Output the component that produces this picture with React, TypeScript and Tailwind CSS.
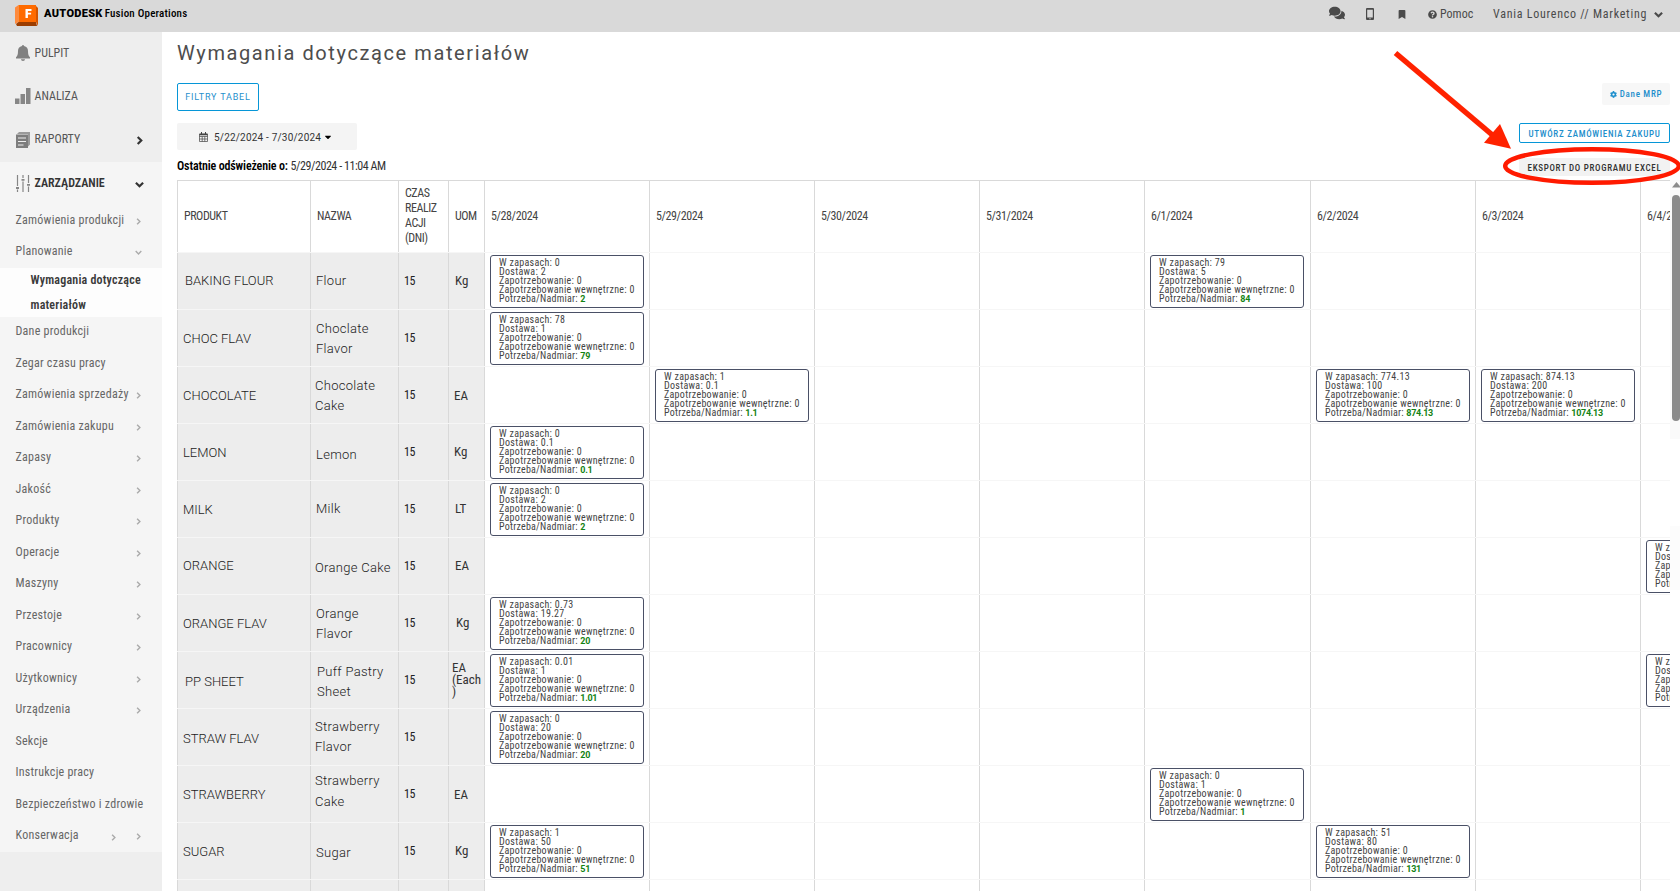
import type { ReactNode } from "react";
import { FaBookmark, FaCaretDown, FaCog, FaComments, FaQuestionCircle } from "react-icons/fa";

const COLS = "grid grid-cols-[133px_88px_50px_36px_165px_165px_165px_165px_166px_165px_165px_160px]";
const DATES = ["5/28/2024", "5/29/2024", "5/30/2024", "5/31/2024", "6/1/2024", "6/2/2024", "6/3/2024", "6/4/2024"];

type Stock = { col: number; stock: string; supply: string; total: string };
type Row = {
  product: string;
  productPad?: string;
  name: string[];
  namePad: string;
  uom: string;
  uomPad?: string;
  cards: Stock[];
};

const ROWS: Row[] = [
  { product: "BAKING FLOUR", productPad: "pl-[7px]", name: ["Flour"], namePad: "pl-[5px]", uom: "Kg", uomPad: "pl-[6px]", cards: [{ col: 0, stock: "0", supply: "2", total: "2" }, { col: 4, stock: "79", supply: "5", total: "84" }] },
  { product: "CHOC FLAV", productPad: "pl-[5px] pt-[2px]", name: ["Choclate", "Flavor"], namePad: "pl-[5px] pt-[2px]", uom: "", cards: [{ col: 0, stock: "78", supply: "1", total: "79" }] },
  { product: "CHOCOLATE", productPad: "pl-[5px] pt-[2px]", name: ["Chocolate", "Cake"], namePad: "pl-1 pt-[2px]", uom: "EA", uomPad: "pl-[5px] pt-[2px]", cards: [{ col: 1, stock: "1", supply: "0.1", total: "1.1" }, { col: 5, stock: "774.13", supply: "100", total: "874.13" }, { col: 6, stock: "874.13", supply: "200", total: "1074.13" }] },
  { product: "LEMON", productPad: "pl-[5px] pt-[2px]", name: ["Lemon"], namePad: "pl-[5px] pt-[6px]", uom: "Kg", cards: [{ col: 0, stock: "0", supply: "0.1", total: "0.1" }] },
  { product: "MILK", productPad: "pl-[5px] pt-[2px]", name: ["Milk"], namePad: "pl-[5px]", uom: "LT", uomPad: "pl-[6px]", cards: [{ col: 0, stock: "0", supply: "2", total: "2" }] },
  { product: "ORANGE", name: ["Orange Cake"], namePad: "pl-1 pt-[5px]", uom: "EA", uomPad: "pl-[6px]", cards: [{ col: 7, stock: "0", supply: "1", total: "1" }] },
  { product: "ORANGE FLAV", productPad: "pl-[5px] pt-[2px]", name: ["Orange", "Flavor"], namePad: "pl-[5px] pt-[2px]", uom: "Kg", uomPad: "pl-[7px]", cards: [{ col: 0, stock: "0.73", supply: "19.27", total: "20" }] },
  { product: "PP SHEET", productPad: "pl-[7px] pt-[4px]", name: ["Puff Pastry", "Sheet"], namePad: "pl-[6px] pt-[4px]", uom: "EA (Each )", uomPad: "pl-[3px]", cards: [{ col: 0, stock: "0.01", supply: "1", total: "1.01" }, { col: 7, stock: "0", supply: "1", total: "1" }] },
  { product: "STRAW FLAV", productPad: "pl-[5px] pt-[3px]", name: ["Strawberry", "Flavor"], namePad: "pl-1", uom: "", cards: [{ col: 0, stock: "0", supply: "20", total: "20" }] },
  { product: "STRAWBERRY", productPad: "pl-[5px] pt-[2px]", name: ["Strawberry", "Cake"], namePad: "pl-1 pb-[5px]", uom: "EA", uomPad: "pl-[5px] pt-px", cards: [{ col: 4, stock: "0", supply: "1", total: "1" }] },
  { product: "SUGAR", productPad: "pl-[5px] pt-[2px]", name: ["Sugar"], namePad: "pl-[5px] pt-[5px]", uom: "Kg", uomPad: "pl-[6px]", cards: [{ col: 0, stock: "1", supply: "50", total: "51" }, { col: 5, stock: "51", supply: "80", total: "131" }] },
];

const MENU: [string, number][] = [
  ["Dane produkcji", 0], ["Zegar czasu pracy", 0], ["Zamówienia sprzedaży", 1], ["Zamówienia zakupu", 1], ["Zapasy", 1],
  ["Jakość", 1], ["Produkty", 1], ["Operacje", 1], ["Maszyny", 1], ["Przestoje", 1], ["Pracownicy", 1], ["Użytkownicy", 1],
  ["Urządzenia", 1], ["Sekcje", 0], ["Instrukcje pracy", 0], ["Bezpieczeństwo i zdrowie", 0], ["Konserwacja", 2],
];

function Chevron({ down, small, className = "" }: { down?: boolean; small?: boolean; className?: string }) {
  return (
    <svg viewBox="0 0 10 10" className={`${small ? "size-[7px]" : "size-[9px]"} shrink-0 ${className}`} fill="none" stroke="currentColor" strokeWidth={small ? 2 : 2.400}>
      <path d={down ? "M1 3l4 4 4-4" : "M3 1l4 4-4 4"} />
    </svg>
  );
}

function Logo() {
  return (
    <svg viewBox="0 0 24 22" className="h-[22px] w-6">
      <path d="M0 2.500L3.500 0V17L0 19z" fill="#ff8a3c" />
      <path d="M1 19l2.500-2H21l1 4H2z" fill="#9c3d00" />
      <path d="M21 1l2 2v18l-2-4z" fill="#d45500" />
      <path d="M3.500 0H21v17H3.500z" fill="#ff6b00" />
      <path d="M10.500 4h6v1.900h-3.600v1.800h3.200v1.800h-3.200V13h-2.400z" fill="#fff" />
    </svg>
  );
}

function BellIcon() {
  return (
    <svg viewBox="0 0 14 16" className="h-4 w-[14px]" fill="#808080">
      <path d="M6 1a1 1 0 012 0c2.800.6 4 2.700 4 5 0 3.500.6 5 2 6.200V13.500H0v-1.300C1.400 11 2 9.500 2 6c0-2.300 1.200-4.400 4-5zM5 14.300h4c0 1-.9 1.700-2 1.700s-2-.7-2-1.700z" />
    </svg>
  );
}

function BarsIcon() {
  return (
    <svg viewBox="0 0 16 16" className="size-4" fill="#868686">
      <path d="M0 10.500h4.500V16H0zM5.500 6H10v10H5.500zM11 0h4.500v16H11z" />
    </svg>
  );
}

function ReportIcon() {
  return (
    <svg viewBox="0 0 14 16" className="h-4 w-[14px]">
      <path d="M3 0h11v12.500l-2 2V2H1z" fill="#9a9a9a" />
      <path d="M0 2.500h12V16H0z" fill="#7d7d7d" />
      <path d="M2 6h8M2 9.500h8M2 13h5.500" stroke="#eee" strokeWidth="1.200" />
    </svg>
  );
}

function SlidersIcon() {
  return (
    <svg viewBox="0 0 14 17" className="h-[17px] w-[14px]" stroke="#868686" fill="#868686">
      <path d="M1.500 0v11M1.500 14.500V17M7 0v3M7 6.500V17M12.500 0v8M12.500 11.500V17" strokeWidth="1.200" fill="none" />
      <path d="M0 13h3M5.500 4.800h3M11 9.800h3" strokeWidth="1.800" />
    </svg>
  );
}

function CalendarIcon() {
  return (
    <svg viewBox="0 0 9 10" className="h-[10px] w-[9px]" fill="none" stroke="#444">
      <path d="M.5 2h8v7.500h-8zM.5 4.500h8M.5 7h8M3.200 4.500v5M5.800 4.500v5" strokeWidth=".7" />
      <path d="M.5 2.500h8" strokeWidth="1.600" />
      <path d="M2.500 0v2.500M6.500 0v2.500" />
    </svg>
  );
}

function NavRow({ icon, label, arrow, bold, className }: { icon: ReactNode; label: string; arrow?: "right" | "down"; bold?: boolean; className: string }) {
  return (
    <div className={`flex items-center pl-[15px] pr-[18px] text-[12px] ${className}`}>
      <span className="flex w-[19.5px] shrink-0">{icon}</span>
      <span className={`flex-1 tracking-[0px] ${bold ? "font-semibold text-[#333]" : "text-[#555]"}`}>{label}</span>
      {arrow && <Chevron down={arrow === "down"} className="mt-[2px] text-[#333]" />}
    </div>
  );
}

function SubRow({ label, arrows = 0, down, className = "h-[31.5px] pb-[3px]" }: { label: string; arrows?: number; down?: boolean; className?: string }) {
  return (
    <div className={`flex items-center pl-[15.5px] pr-5 text-[12px] tracking-[0.25px] text-[#666] ${className}`}>
      <span className="flex-1 whitespace-nowrap">{label}</span>
      {arrows === 2 && <Chevron small className="mt-1 mr-[18px] text-[#aaa]" />}
      {arrows > 0 && <Chevron small down={down} className="mt-[3px] text-[#aaa]" />}
    </div>
  );
}

function StockCard({ stock, supply, total }: Stock) {
  return (
    <div className="h-[53px] w-[154px] whitespace-nowrap rounded-[3px] border border-[#4a5066] bg-white pl-[8px] pt-[2px] text-[10px] leading-[9px] tracking-[0.3px] text-[#444]">
      <p>W zapasach: {stock}</p>
      <p>Dostawa: {supply}</p>
      <p>Zapotrzebowanie: 0</p>
      <p>Zapotrzebowanie wewnętrzne: 0</p>
      <p className="tracking-[0.23px]">
        Potrzeba/Nadmiar: <b className="font-['Roboto',sans-serif] text-[9px] font-bold tracking-[-0.3px] text-[#138313]">{total}</b>
      </p>
    </div>
  );
}

function Sidebar() {
  return (
    <aside className="flex w-[162px] shrink-0 flex-col bg-[#eee]">
      <NavRow className="h-[43px] pb-[2px]" icon={<span className="pl-px"><BellIcon /></span>} label="PULPIT" />
      <NavRow className="h-[43px] pb-px" icon={<BarsIcon />} label="ANALIZA" />
      <NavRow className="h-[44px] pb-[2px]" icon={<span className="pl-px pt-[2px]"><ReportIcon /></span>} label="RAPORTY" arrow="right" />
      <div className="h-[690px] bg-[#f5f5f5]">
        <NavRow className="h-[43px] pb-px" icon={<span className="pl-px pt-px"><SlidersIcon /></span>} label="ZARZĄDZANIE" arrow="down" bold />
        <SubRow label="Zamówienia produkcji" arrows={1} className="h-[30px] pb-px" />
        <SubRow label="Planowanie" arrows={1} down className="h-[33px] pb-[2px]" />
        <div className="h-[49px] bg-[#fdfdfd] pl-[30.5px] text-[12px] font-semibold leading-[25px] tracking-[0.2px] text-[#3a3a3a]">
          Wymagania dotyczące materiałów
        </div>
        {MENU.map(([label, arrows]) => (
          <SubRow key={label} label={label} arrows={arrows} />
        ))}
      </div>
    </aside>
  );
}

function Table() {
  const head = "flex items-center border-l border-[#d9d9d9] pl-[6px]";
  const gray = "flex items-center border-l border-[#d9d9d9] bg-[#ededed]";
  return (
    <div className="w-[1493px] overflow-hidden border-t border-[#d9d9d9]">
      <div className={`${COLS} h-[71px] text-[12px] tracking-[-0.45px] text-[#444]`}>
        <div className={`${head} pb-px`}>PRODUKT</div>
        <div className={`${head} pb-px`}>NAZWA</div>
        <div className={`${head} pb-[2px] leading-[15px]`}>CZAS<br />REALIZ<br />ACJI<br />(DNI)</div>
        <div className={`${head} pb-px`}>UOM</div>
        {DATES.map((d) => (
          <div key={d} className={`${head} pb-px tracking-[-0.4px]`}>{d}</div>
        ))}
      </div>
      {ROWS.map((r) => (
        <div key={r.product} className={`${COLS} h-[57px] border-t border-[#f6f6f6]`}>
          <div className={`${gray} ${r.productPad ?? "pl-[5px]"} font-['Roboto',sans-serif] text-[13px] font-light text-[#1c1c1c]`}>{r.product}</div>
          <div className={`${gray} ${r.namePad} whitespace-nowrap font-['Roboto',sans-serif] text-[13px] font-light leading-[20.500px] tracking-[0.3px] text-[#1c1c1c]`}>
            <div>{r.name.map((n) => <p key={n}>{n}</p>)}</div>
          </div>
          <div className={`${gray} pl-[5px] text-[12px] tracking-[-0.5px] text-[#222]`}>15</div>
          <div className={`${gray} ${r.uomPad ?? "pl-[5px]"} text-[13px] leading-[12px] text-[#333]`}>{r.uom}</div>
          {DATES.map((d, i) => {
            const card = r.cards.find((c) => c.col === i);
            return (
              <div key={d} className="border-l border-[#d9d9d9] pl-[5px] pt-[2px]">
                {card && <StockCard {...card} />}
              </div>
            );
          })}
        </div>
      ))}
      <div className={`${COLS} h-[57px] border-t border-[#f6f6f6]`}>
        {[0, 1, 2, 3].map((i) => <div key={i} className={gray} />)}
        {DATES.map((d) => <div key={d} className="border-l border-[#d9d9d9]" />)}
      </div>
    </div>
  );
}

export default function App() {
  return (
    <div className="relative flex h-[891px] w-[1680px] flex-col overflow-hidden bg-white font-['Roboto_Condensed','Roboto',sans-serif]">
      <header className="flex h-8 shrink-0 items-center bg-[#d9d9d9] pb-1 pl-[15px] pr-[17px] text-[#4a4a4a]">
        <span className="pt-[3px]"><Logo /></span>
        <span className="ml-[5px] font-['Roboto',sans-serif] text-[11px] font-black tracking-[0.3px] text-black">AUTODESK</span>
        <span className="ml-[2px] text-[11px] font-medium tracking-[0.2px] text-black">Fusion Operations</span>
        <span className="flex-1" />
        <FaComments className="mt-[-3px] size-4" />
        <svg viewBox="0 0 8 12" className="ml-[21px] h-3 w-2" fill="currentColor">
          <path fillRule="evenodd" d="M1 0h6a1 1 0 011 1v10a1 1 0 01-1 1H1a1 1 0 01-1-1V1a1 1 0 011-1zM1.200 1.800v7.600h5.600V1.800zM3.400 10.200v1h1.200v-1z" />
        </svg>
        <FaBookmark className="ml-6 mt-px h-[9px] w-[8px]" />
        <FaQuestionCircle className="ml-[22px] mt-px size-[9px]" />
        <span className="ml-[3px] w-[34px] text-[12px] tracking-[0px]">Pomoc</span>
        <span className="ml-[19px] w-[155px] whitespace-nowrap text-[12px] tracking-[0.75px]">Vania Lourenco // Marketing</span>
        <Chevron down className="ml-[6px] mt-px" />
      </header>
      <div className="flex min-h-0 flex-1">
        <Sidebar />
        <main className="flex min-w-0 flex-1 flex-col pl-[15px]">
          <div className="flex h-[148px] shrink-0 justify-between pr-[10px]">
            <div className="flex flex-col items-start">
              <h1 className="h-[51px] pt-[6px] font-['Roboto',sans-serif] text-[20px] leading-[30px] tracking-[1.600px] text-[#4d4d4d]">Wymagania dotyczące materiałów</h1>
              <button className="h-7 w-[82px] rounded-[2px] border border-[#0696d7] pt-[2px] font-['Roboto',sans-serif] text-[9px] tracking-[0.8px] text-[#1f8fcc]">FILTRY TABEL</button>
              <div className="mt-3 flex h-[27px] w-[180px] items-center rounded-[2px] bg-[#f4f4f4] pl-[22px] text-[#333]">
                <CalendarIcon />
                <span className="ml-[6px] pt-px font-['Roboto',sans-serif] text-[10px] tracking-[0.2px]">5/22/2024 - 7/30/2024</span>
                <FaCaretDown className="ml-[2px] size-[10px] text-black" />
              </div>
              <p className="mt-[7px] text-[12px] leading-[18px] text-[#333]">
                <b className="font-semibold tracking-[-0.15px] text-black">Ostatnie odświeżenie o:</b>{" "}
                <span className="tracking-[-0.450px]">5/29/2024 - 11:04 AM</span>
              </p>
            </div>
            <div className="flex flex-col items-end pt-[51px] text-[9px] font-medium">
              <button className="flex h-[22px] w-[68px] items-center justify-center gap-[3px] rounded-[2px] bg-[#f7f7f7] pt-px tracking-[0.7px] text-[#1f8fcc]">
                <FaCog className="size-[7px]" />
                Dane MRP
              </button>
              <button className="mt-[18px] h-5 w-[151px] rounded-[2px] border border-[#0696d7] bg-white pt-[2px] leading-[12px] tracking-[0.700px] text-[#1f8fcc]">UTWÓRZ ZAMÓWIENIA ZAKUPU</button>
              <button className="mt-[15px] h-[18px] w-[151px] bg-[#f2f2f2] pt-[2px] leading-[12px] tracking-[0.700px] text-[#333]">EKSPORT DO PROGRAMU EXCEL</button>
            </div>
          </div>
          <div className="flex min-h-0 flex-1">
            <Table />
            <div className="flex w-[10px] flex-col items-end">
              <div className="flex h-[259px] w-[10px] flex-col items-end bg-[#fafafa] pt-[2px]">
                <svg viewBox="0 0 8 6" className="h-[6px] w-2" fill="#8b8b8b"><path d="M4.500 0L9 5.500H0z" /></svg>
                <div className="mt-[7px] h-[226px] w-2 rounded-[4px] bg-[#8b8b8b]" />
              </div>
              <div className="mt-[87px] h-16 w-[10px] bg-[#fcfcfc]" />
            </div>
          </div>
        </main>
      </div>
      <svg viewBox="0 0 300 160" className="pointer-events-none absolute left-[1380px] top-[40px] h-[160px] w-[300px]">
        <path d="M15.500 13L113 95.500" stroke="#ff2200" strokeWidth="5.500" />
        <path d="M120 84l11 24.700-27-6z" fill="#ff2200" />
        <ellipse cx="212" cy="126" rx="86.800" ry="16.800" fill="none" stroke="#ff1a00" strokeWidth="4.500" />
      </svg>
    </div>
  );
}
